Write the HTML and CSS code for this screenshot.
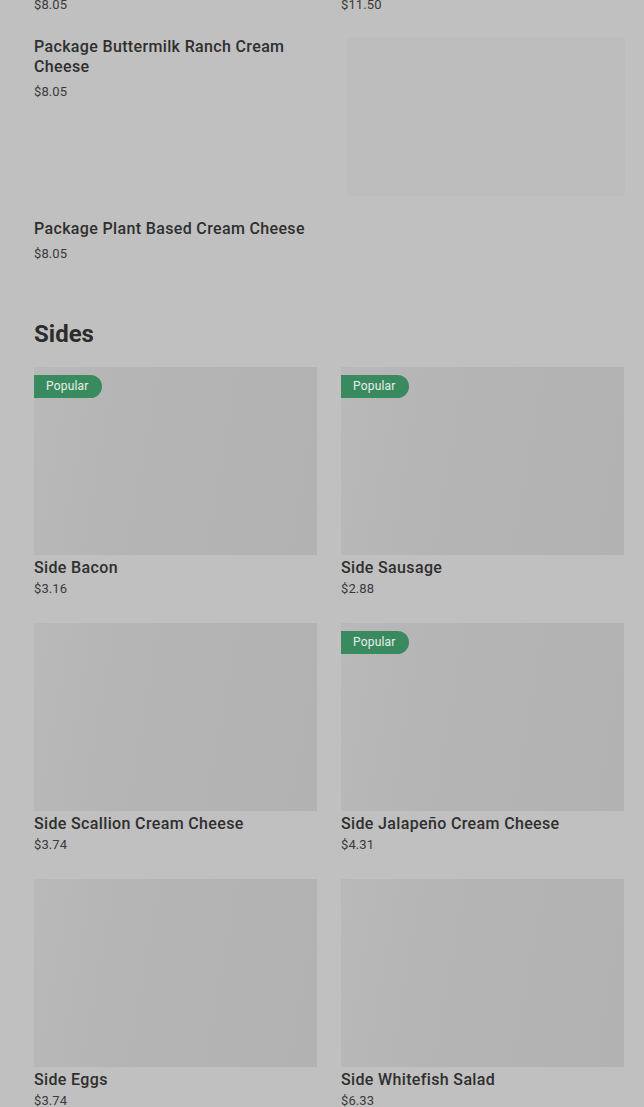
FILE: index.html
```html
<!DOCTYPE html>
<html lang="en">
<head>
<meta charset="utf-8">
<title>Menu</title>
<link rel="stylesheet" href="styles.css">
</head>
<body>
<main class="page">
  <section class="list-section">
    <div class="pair-row">
      <div class="pair-item"><div class="price">$8.05</div></div>
      <div class="pair-item"><div class="price">$11.50</div></div>
    </div>
    <div class="list-item">
      <div class="list-text">
        <div class="name">Package Buttermilk Ranch Cream Cheese</div>
        <div class="price list-price">$8.05</div>
      </div>
      <div class="list-image"></div>
    </div>
    <div class="list-item">
      <div class="list-text">
        <div class="name">Package Plant Based Cream Cheese</div>
        <div class="price list-price">$8.05</div>
      </div>
    </div>
  </section>

  <section class="grid-section">
    <h2 class="section-title">Sides</h2>
    <div class="grid">
      <div class="card">
        <div class="card-image"><span class="badge">Popular</span></div>
        <div class="name">Side Bacon</div>
        <div class="price card-price">$3.16</div>
      </div>
      <div class="card">
        <div class="card-image"><span class="badge">Popular</span></div>
        <div class="name">Side Sausage</div>
        <div class="price card-price">$2.88</div>
      </div>
      <div class="card">
        <div class="card-image"></div>
        <div class="name">Side Scallion Cream Cheese</div>
        <div class="price card-price">$3.74</div>
      </div>
      <div class="card">
        <div class="card-image"><span class="badge">Popular</span></div>
        <div class="name">Side Jalapeño Cream Cheese</div>
        <div class="price card-price">$4.31</div>
      </div>
      <div class="card">
        <div class="card-image"></div>
        <div class="name">Side Eggs</div>
        <div class="price card-price">$3.74</div>
      </div>
      <div class="card">
        <div class="card-image"></div>
        <div class="name">Side Whitefish Salad</div>
        <div class="price card-price">$6.33</div>
      </div>
    </div>
  </section>
</main>
</body>
</html>
```

FILE: styles.css
```css
html, body {
  margin: 0;
  padding: 0;
  background: #c0c0c0;
}

body {
  font-family: Roboto, "Liberation Sans", sans-serif;
  color: #303030;
  overflow: hidden;
}

.page {
  padding: 0 20px 0 34px;
}

.list-section {
  display: flex;
  flex-direction: column;
  gap: 23px;
  margin-top: -4px;
}

.list-section .list-item + .list-item {
  margin-top: 1px;
}

.pair-row {
  display: grid;
  grid-template-columns: 1fr 1fr;
  column-gap: 24px;
}

.name {
  font-size: 16px;
  line-height: 20px;
  font-weight: 500;
  letter-spacing: 0.35px;
  color: #2f2f2f;
}

.price {
  font-size: 13px;
  line-height: 18px;
  font-weight: 400;
  letter-spacing: 0.1px;
  color: #3a3a3a;
}

.list-item {
  display: flex;
  justify-content: space-between;
  align-items: flex-start;
}

.list-text {
  width: 295px;
}

.list-price {
  margin-top: 6px;
}

.list-image {
  width: 276px;
  height: 156px;
  margin-top: 2px;
  background: #bdbdbd;
  box-shadow: 0 0 2px rgba(0, 0, 0, 0.04);
}

.grid-section {
  margin-top: 55px;
}

.section-title {
  margin: 0 0 17px;
  font-size: 24px;
  line-height: 32px;
  font-weight: 700;
  color: #2c2c2c;
}

.grid {
  display: grid;
  grid-template-columns: 1fr 1fr;
  column-gap: 24px;
  row-gap: 25px;
}

.card-image {
  position: relative;
  height: 188px;
  margin-bottom: 3px;
  background: linear-gradient(100deg, #b9b9b9 0%, #b4b4b4 40%, #b2b2b2 100%);
}

.card-price {
  margin-top: 2px;
}

.badge {
  position: absolute;
  top: 8px;
  left: 0;
  height: 23px;
  line-height: 23px;
  padding: 0 13px 0 12px;
  font-size: 12px;
  font-weight: 400;
  letter-spacing: 0.2px;
  color: #e8efe9;
  background: #3a8a60;
  border-radius: 0 12px 12px 0;
}
```
